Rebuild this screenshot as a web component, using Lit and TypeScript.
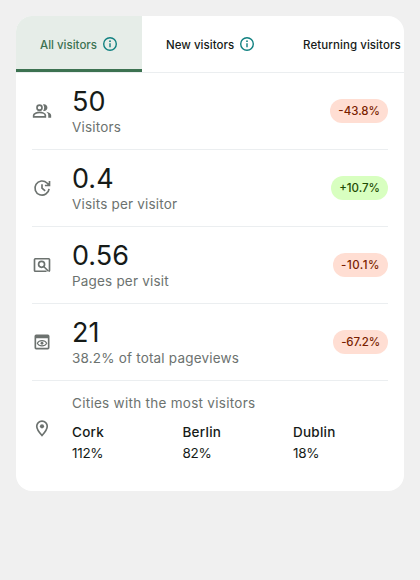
import { LitElement, html, css, svg } from "lit";
import { customElement, state } from "lit/decorators.js";
import { classMap } from "lit/directives/class-map.js";

const icons = {
  people: svg`<circle cx="9" cy="8" r="3"/><path d="M2 19v-1.8C2 14.9 6 13.7 9 13.7s7 1.2 7 3.5V19z"/><path class="solid" d="M14.5 12c2.2 0 4-1.8 4-4s-1.8-4-4-4c-.5 0-.9.1-1.3.2.9 1.1 1.4 2.4 1.4 3.8s-.5 2.7-1.4 3.8c.4.1.8.2 1.3.2zM17 13c1.6.9 2.5 2.2 2.5 4.200V20H23v-2.800c0-2.300-3-3.700-6-4.200z"/>`,
  update: svg`<path d="M20.500 13a8.500 8.500 0 1 1-2.500-7L20.500 8.500M21 3.500v5.500h-5.500M12 7.500V12.200l3.800 3.300"/>`,
  search: svg`<path d="M17.500 19.500H4a1 1 0 0 1-1-1V5.500a1 1 0 0 1 1-1h16a1 1 0 0 1 1 1v13a1 1 0 0 1-1 1"/><circle cx="11.500" cy="11.200" r="3.600"/><path d="M14 13.800l5.800 5.700"/>`,
  preview: svg`<path d="M5 4h14a1 1 0 0 1 1 1v14a1 1 0 0 1-1 1H5a1 1 0 0 1-1-1V5a1 1 0 0 1 1-1z"/><path class="solid" d="M4 4h16v3.500H4z"/><path class="thin" d="M6.300 13.500c2.200-4.200 9.200-4.200 11.400 0-2.200 4.200-9.200 4.200-11.400 0z"/><circle class="solid" cx="12" cy="13.500" r="1.700"/>`,
  pin: svg`<path d="M12 21c-4.200-4.400-6.300-7.900-6.300-11a6.300 6.300 0 0 1 12.600 0c0 3.100-2.100 6.600-6.300 11z"/><circle class="solid" cx="12" cy="10" r="2.500"/>`,
};

const tabs = [
  { label: "All visitors", tracking: 0, info: true },
  { label: "New visitors", tracking: 0.02, info: true },
  { label: "Returning visitors", tracking: 0.07, info: false },
];

const metrics = [
  { icon: icons.people, value: "50", label: "Visitors", change: "-43.8%", tracking: 0 },
  { icon: icons.update, value: "0.4", label: "Visits per visitor", change: "+10.7%", tracking: 0 },
  { icon: icons.search, value: "0.56", label: "Pages per visit", change: "-10.1%", tracking: 0.5 },
  { icon: icons.preview, value: "21", label: "38.2% of total pageviews", change: "-67.2%", tracking: -0.15 },
];

const cities = [
  { name: "Cork", share: "112%" },
  { name: "Berlin", share: "82%" },
  { name: "Dublin", share: "18%" },
];

@customElement("app-root")
export class AppRoot extends LitElement {
  @state() private active = 0;

  static styles = css`
    :host { display: block; box-sizing: border-box; height: 580px; padding: 16px; background: #f0f0f0; color: #161b18; font-family: Inter, "Liberation Sans", sans-serif; overflow: hidden; }
    * { box-sizing: border-box; }
    .card { height: 475px; border-radius: 16px; background: #fff; overflow: hidden; }
    .tabs { display: flex; height: 57px; border-bottom: 1px solid #ebeef0; }
    .tab { display: flex; flex: none; align-items: center; height: 56px; padding: 1px 24px 0; white-space: nowrap; font-size: 11.5px; font-weight: 500; cursor: pointer; }
    .tab.on { padding-top: 4px; background: #e6ede8; color: #3c7251; border-bottom: 3px solid #3c7251; }
    .info { width: 16px; height: 16px; margin: -2px 0 0 5px; fill: none; stroke: #108080; stroke-width: 1.4; flex: none; }
    .info .dot { fill: #108080; stroke: none; }
    .body { padding: 0 16px; }
    .row { display: flex; align-items: center; height: 77px; border-bottom: 1px solid #ebeef0; }
    .icon { flex: none; width: 20px; height: 20px; margin-right: 20px; fill: none; stroke: #6c726f; stroke-width: 2; }
    .icon .solid { fill: #6c726f; stroke: none; }
    .icon .thin { stroke-width: 1.3; }
    .text { flex: 1; }
    .value { font-size: 27px; line-height: 34px; padding-top: 1px; height: 34px; }
    .label { font-size: 13.5px; line-height: 20px; margin: -1px 0 1px; color: #6c726f; letter-spacing: 0.19px; }
    .label.wide { letter-spacing: 0.28px; }
    .chip { height: 24px; padding: 0 8px; border-radius: 12px; line-height: 24px; font-size: 11.5px; font-weight: 500; background: #ffded3; color: #7a1e00; }
    .chip.up { background: #d8ffc0; color: #1f4c04; }
    .cities { display: flex; align-items: center; height: 93px; }
    .cities .text { padding-top: 3px; }
    .grid { display: grid; grid-template-columns: repeat(3, 110.5px); width: 316px; margin-top: 9px; }
    .name, .share { font-size: 13.5px; line-height: 21px; }
    .name { font-weight: 500; letter-spacing: 0.25px; }
    .share { letter-spacing: -0.3px; }
  `;

  render() {
    return html`<div class="card">
      <div class="tabs" role="tablist">
        ${tabs.map((t, i) => html`<div role="tab" class=${classMap({ tab: true, on: i === this.active })} @click=${() => (this.active = i)}>
          <span style="letter-spacing:${t.tracking}px">${t.label}</span>${t.info ? html`<svg class="info" viewBox="0 0 16 16"><circle cx="8" cy="8" r="6.300"/><path d="M8 7.300v4"/><circle class="dot" cx="8" cy="5.200" r=".9"/></svg>` : ""}
        </div>`)}
      </div>
      <div class="body">
        ${metrics.map((m) => html`<div class="row">
          <svg class="icon" viewBox="0 0 24 24">${m.icon}</svg>
          <div class="text"><div class="value">${m.value}</div><div class="label">${m.label}</div></div>
          <div class=${classMap({ chip: true, up: m.change.startsWith("+") })} style="letter-spacing:${m.tracking}px">${m.change}</div>
        </div>`)}
        <div class="cities">
          <svg class="icon" viewBox="0 0 24 24">${icons.pin}</svg>
          <div class="text">
            <div class="label wide">Cities with the most visitors</div>
            <div class="grid">${cities.map((c) => html`<div><div class="name">${c.name}</div><div class="share">${c.share}</div></div>`)}</div>
          </div>
        </div>
      </div>
    </div>`;
  }
}
